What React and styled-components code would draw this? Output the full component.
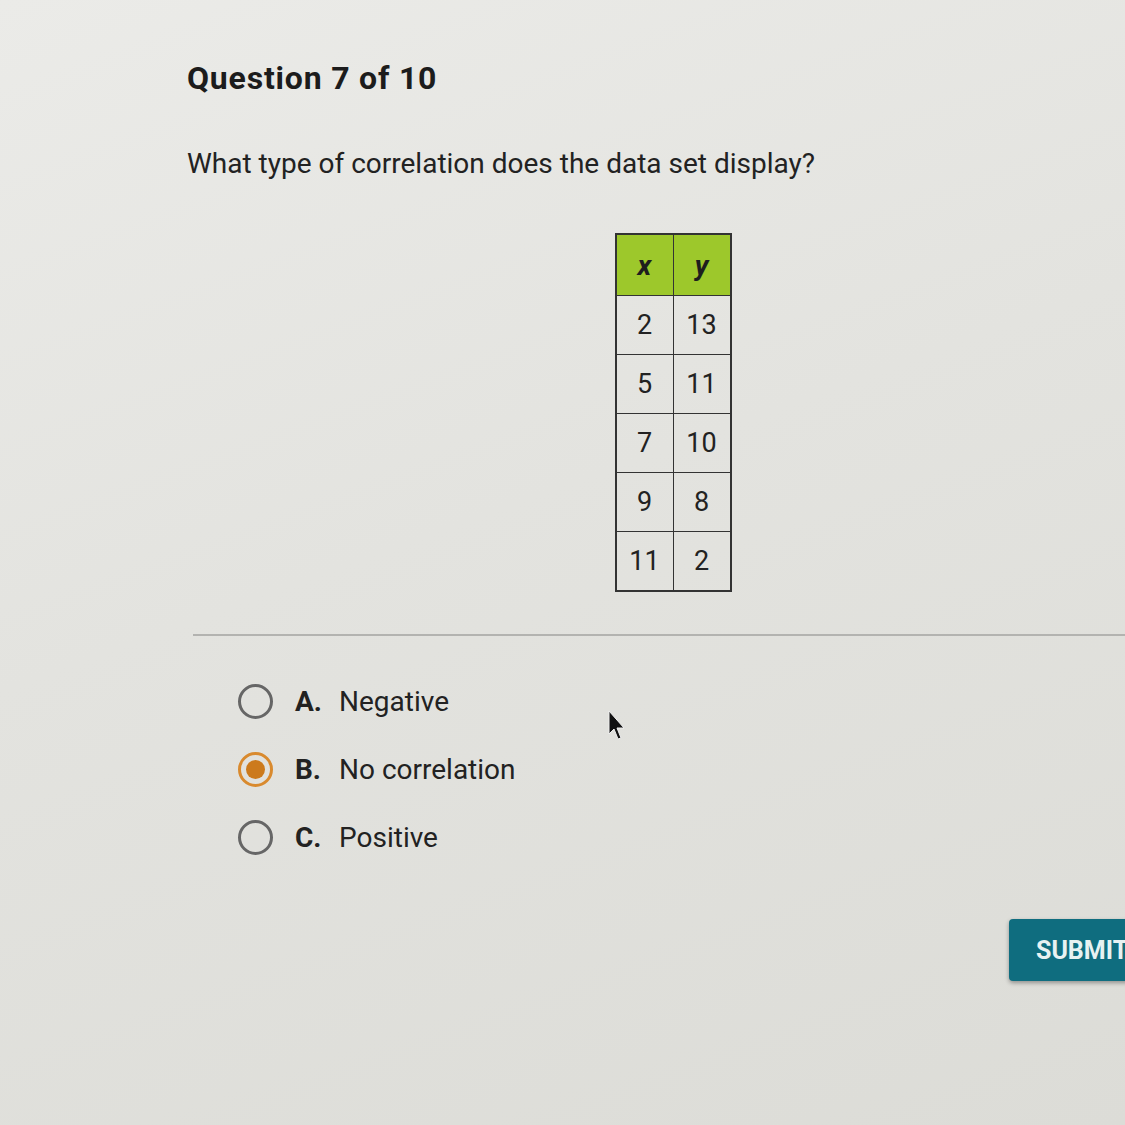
import styled, { createGlobalStyle } from "styled-components";

const GlobalStyle = createGlobalStyle`
  html, body {
    margin: 0;
    padding: 0;
    overflow: hidden;
  }
  body {
    width: 1125px;
    height: 1125px;
    background: linear-gradient(160deg, #ebebe8 0%, #e3e3df 45%, #dcdcd7 100%);
    font-family: Roboto, "Liberation Sans", sans-serif;
    color: #222;
  }
`;

const Page = styled.div`
  width: 972px;
  padding: 59px 0 0 187px;
  position: relative;
`;

const Title = styled.h1`
  margin: 0;
  font-size: 32px;
  font-weight: 700;
  letter-spacing: 0.8px;
  color: #1c1c1c;
`;

const Prompt = styled.p`
  margin: 50px 0 0;
  font-size: 28px;
  font-weight: 400;
  color: #222;
`;

const TableWrap = styled.div`
  display: flex;
  justify-content: center;
  margin-top: 53px;
`;

const Table = styled.table`
  border-collapse: collapse;
  border: 2px solid #333;
`;

const Head = styled.th`
  width: 56px;
  height: 60px;
  background: #9dc82b;
  border: 1.5px solid #333;
  font-size: 28px;
  font-style: italic;
  font-weight: 700;
  color: #1e1e1e;
  padding: 0;
`;

const Cell = styled.td`
  height: 58px;
  border: 1.5px solid #333;
  text-align: center;
  font-size: 27px;
  color: #222;
  padding: 0;
`;

const Divider = styled.hr`
  margin: 42px -40px 0 6px;
  border: 0;
  border-top: 2px solid #b3b3b0;
`;

const Options = styled.div`
  display: flex;
  flex-direction: column;
  gap: 33px;
  margin: 48px 0 0 51px;
`;

const Option = styled.label`
  display: flex;
  align-items: center;
  font-size: 28px;
  color: #222;
`;

const Radio = styled.span`
  box-sizing: border-box;
  width: 35px;
  height: 35px;
  border-radius: 50%;
  border: 3px solid ${(p) => (p.$checked ? "#d98a2e" : "#666")};
  display: flex;
  align-items: center;
  justify-content: center;
  margin-right: 22px;
  &::after {
    content: "";
    display: ${(p) => (p.$checked ? "block" : "none")};
    width: 19px;
    height: 19px;
    border-radius: 50%;
    background: #cc7a1c;
  }
`;

const Letter = styled.span`
  font-weight: 700;
  width: 44px;
  color: #222;
`;

const Footer = styled.div`
  display: flex;
  justify-content: flex-end;
  margin-top: 64px;
`;

const Submit = styled.button`
  width: 150px;
  height: 62px;
  border: 0;
  border-radius: 4px;
  background: #0f6d7f;
  color: #e8f2f2;
  font-family: Roboto, "Liberation Sans", sans-serif;
  font-size: 25px;
  font-weight: 700;
  text-align: left;
  padding-left: 27px;
  white-space: nowrap;
  box-shadow: 0 2px 4px rgba(0, 0, 0, 0.35);
`;

const Cursor = styled.svg`
  position: absolute;
  left: 607px;
  top: 710px;
`;

const rows = [
  [2, 13],
  [5, 11],
  [7, 10],
  [9, 8],
  [11, 2],
];

const options = [
  { letter: "A.", text: "Negative" },
  { letter: "B.", text: "No correlation", checked: true },
  { letter: "C.", text: "Positive" },
];

export default function App() {
  return (
    <>
      <GlobalStyle />
      <Page>
        <Title>Question 7 of 10</Title>
        <Prompt>What type of correlation does the data set display?</Prompt>
        <TableWrap>
          <Table>
            <thead>
              <tr>
                <Head>x</Head>
                <Head>y</Head>
              </tr>
            </thead>
            <tbody>
              {rows.map(([x, y]) => (
                <tr key={x}>
                  <Cell>{x}</Cell>
                  <Cell>{y}</Cell>
                </tr>
              ))}
            </tbody>
          </Table>
        </TableWrap>
        <Divider />
        <Options>
          {options.map((o) => (
            <Option key={o.letter}>
              <Radio $checked={o.checked} />
              <Letter>{o.letter}</Letter>
              {o.text}
            </Option>
          ))}
        </Options>
        <Footer>
          <Submit>SUBMIT</Submit>
        </Footer>
        <Cursor width="20" height="32" viewBox="0 0 20 32">
          <path d="M2 1 L2 24 L7 19 L11 29 L14 28 L10 18 L17 18 Z" fill="#111" stroke="#eee" strokeWidth="1" />
        </Cursor>
      </Page>
    </>
  );
}
